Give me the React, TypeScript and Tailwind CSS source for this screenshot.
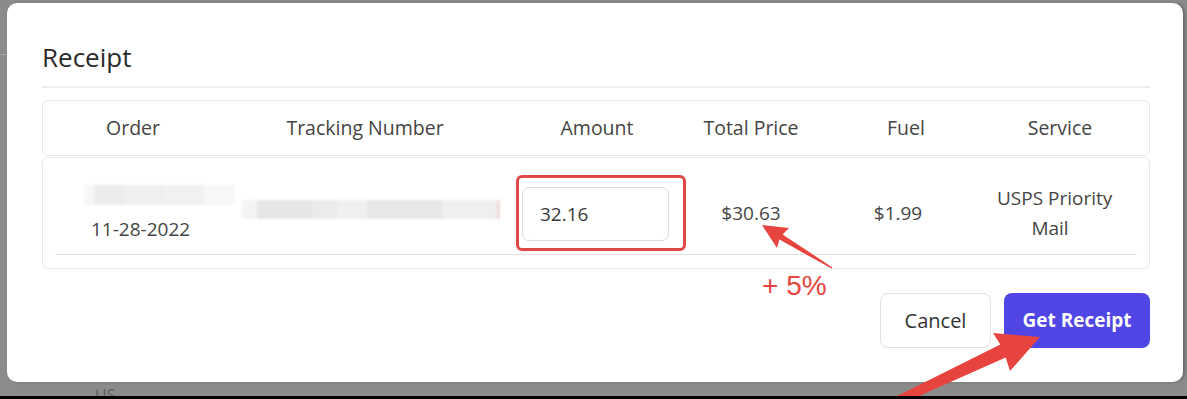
import React from "react";

const font = { fontFamily: '"Open Sans", "Noto Sans", Arial, sans-serif' };

export default function App() {
  return (
    <div className="w-[1187px] h-[399px] flex flex-col overflow-hidden bg-black" style={font}>
      <div className="relative h-[396px] bg-[#8b8b8b] overflow-hidden">
        <div className="absolute left-[95px] top-[385px] text-[16px] leading-[20px] text-[#5f5f5f]">US</div>
        <div className="absolute left-0 top-[54px] w-[6px] h-[1px] bg-[#a5a5a5]" />

        {/* Modal */}
        <div className="relative ml-[7px] mt-[3px] w-[1176px] h-[379px] bg-white rounded-[10px] pl-[35px] pr-[33px] pt-[38px] flex flex-col shadow-[2px_0_3px_rgba(0,0,0,0.25)]">
          <div className="h-[32px] leading-[32px] text-[26px] font-medium text-[#2a2a2a]">Receipt</div>
          <div className="mt-[13px] h-[2px] bg-[#efefef]" />

          {/* Header card */}
          <div className="mt-[12px] h-[56px] border border-[#e8e8e8] rounded-[6px] grid grid-cols-[180px_284px_180px_128px_182px_126px] items-center text-[19.5px] text-[#454545]">
            <div className="text-center">Order</div>
            <div className="text-center">Tracking Number</div>
            <div className="text-center">Amount</div>
            <div className="text-center">Total Price</div>
            <div className="text-center">Fuel</div>
            <div className="text-center">Service</div>
          </div>

          {/* Body card */}
          <div className="mt-[1px] border border-[#e8e8e8] rounded-[6px] pb-[13px] px-[12px]">
            <div className="h-[97px] pt-[14px] border-b border-[#e3e3e3]">
              <div className="-mx-[12px] h-full grid grid-cols-[180px_284px_180px_128px_182px_126px] items-center text-[19px] text-[#454545]">
                <div className="flex flex-col items-start pl-[41px]">
                  <div className="flex h-[20px] w-[151px] blur-[1px]">
                    <div className="w-[10px] bg-[#f7f7f7]" />
                    <div className="w-[30px] bg-[#ececec]" />
                    <div className="w-[40px] bg-[#efefef]" />
                    <div className="w-[40px] bg-[#f1f1f1]" />
                    <div className="w-[31px] bg-[#f8f8f8]" />
                  </div>
                  <div className="ml-[7px] mt-[12px] leading-[24px]">11-28-2022</div>
                </div>
                <div className="pl-[19px] -mt-[7px]">
                  <div className="flex h-[19px] w-[258px] blur-[1px]">
                    <div className="w-[15px] bg-[#f4f4f4]" />
                    <div className="w-[55px] bg-[#e6e6e6]" />
                    <div className="w-[25px] bg-[#ebebeb]" />
                    <div className="w-[30px] bg-[#f0f0f0]" />
                    <div className="w-[75px] bg-[#e7e7e7]" />
                    <div className="w-[55px] bg-[#efefef]" />
                    <div className="w-[3px] bg-[#f3d9d9]" />
                  </div>
                </div>
                <div className="pl-[9px]">
                  <div className="w-[170px] h-[76px] border-[3px] border-[#e04848] rounded-[6px] pl-[3px] pt-[9px]">
                    <div className="w-[147px] h-[54px] border border-[#dcdcdc] rounded-[7px] flex items-center pl-[17px] text-[19px] text-[#3a3a3a]">
                      32.16
                    </div>
                  </div>
                </div>
                <div className="text-center">$30.63</div>
                <div className="text-center pr-[16px]">$1.99</div>
                <div className="text-center pr-[20px] leading-[30px] -mt-[1px] whitespace-nowrap">
                  USPS Priority
                  <br />
                  Mail
                </div>
              </div>
            </div>
          </div>

          {/* Buttons */}
          <div className="mt-[24px] flex justify-end gap-[13px]">
            <button className="w-[111px] h-[55px] rounded-[8px] border border-[#e2e2e2] bg-white text-[20px] text-[#333]">
              Cancel
            </button>
            <button className="w-[146px] h-[55px] rounded-[8px] bg-[#5046e5] text-[19px] font-bold text-white">
              Get Receipt
            </button>
          </div>
        </div>

        {/* Annotations */}
        <div className="absolute left-[762px] top-[270px] text-[28px] leading-[32px] text-[#e5443f]" style={{ fontFamily: '"Liberation Sans", Arial, sans-serif' }}>
          + 5%
        </div>
        <svg className="absolute left-0 top-0 pointer-events-none" width="1187" height="396" viewBox="0 0 1187 396">
          <polygon
            fill="#e8443f"
            points="762,225 789,228 782.6,234.4 832.4,267.4 831.6,268.6 779.4,239.6 777,248"
          />
          <polygon
            fill="#e8443f"
            points="1040,337 993,333 1000.3,344.6 897,396 901,404 1005.7,357.4 1010,371"
          />
        </svg>
      </div>
      <div className="h-[3px] bg-black" />
    </div>
  );
}
